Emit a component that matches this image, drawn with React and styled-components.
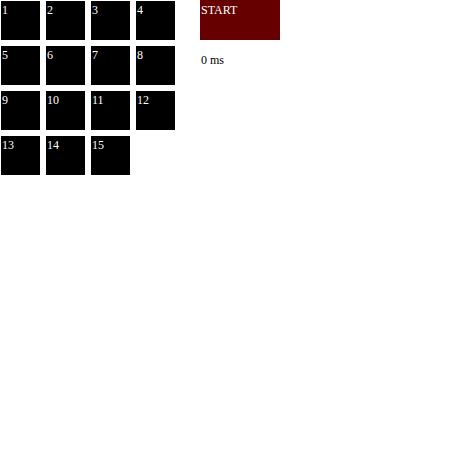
import React from "react";
import styled, { createGlobalStyle } from "styled-components";

const Global = createGlobalStyle`
  html, body { margin: 0; padding: 0; background: #fff; }
  body { font-family: "Liberation Serif", "Times New Roman", serif; font-size: 12px; }
`;

const Page = styled.div`
  display: flex;
  align-items: flex-start;
`;

const Board = styled.div`
  display: grid;
  grid-template-columns: repeat(4, 39px);
  grid-auto-rows: 39px;
  gap: 6px;
  padding: 1px 0 0 1px;
`;

const Tile = styled.div`
  background: #000;
  color: #fff;
  font-size: 12px;
  line-height: 14px;
  padding: 2px 0 0 1px;
  box-sizing: border-box;
`;

const Side = styled.div`
  margin-left: 25px;
  display: flex;
  flex-direction: column;
`;

const StartButton = styled.div`
  width: 80px;
  height: 40px;
  background: #660000;
  color: #fff;
  font-size: 12px;
  line-height: 14px;
  padding: 3px 0 0 1px;
  box-sizing: border-box;
`;

const Timer = styled.div`
  margin-top: 13px;
  padding-left: 1px;
  color: #000;
  font-size: 12px;
  line-height: 14px;
`;

export default function App() {
  const tiles = Array.from({ length: 15 }, (_, i) => i + 1);
  return (
    <>
      <Global />
      <Page>
        <Board>
          {tiles.map((n) => (
            <Tile key={n}>{n}</Tile>
          ))}
        </Board>
        <Side>
          <StartButton>START</StartButton>
          <Timer>0 ms</Timer>
        </Side>
      </Page>
    </>
  );
}
